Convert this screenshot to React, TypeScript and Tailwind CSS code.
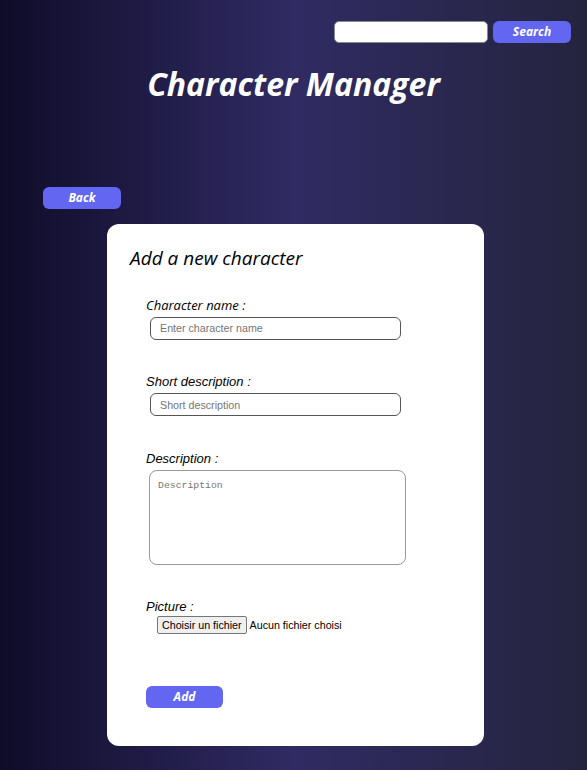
import React from "react";

export default function App() {
  return (
    <div className="min-h-[770px] w-full bg-[linear-gradient(to_right,#0f0c29,#302b63,#24243e)] font-['Comic_Sans_MS','Open_Sans',sans-serif] overflow-hidden">
      <div className="flex justify-end items-center gap-[5px] pt-[21px] pr-[16px]">
        <input
          className="w-[154px] h-[22px] bg-white rounded-[5px] border border-[#8a8a8a] outline-none px-2 text-[11px]"
          type="text"
        />
        <button className="w-[78px] h-[22px] rounded-[6px] bg-[#6366f1] text-white text-[12px] font-bold italic leading-none">
          Search
        </button>
      </div>
      <h1 className="mt-[21px] text-center text-white text-[32px] font-bold italic leading-[40px]">
        Character Manager
      </h1>
      <div className="mt-[80px] pl-[43px]">
        <button className="w-[78px] h-[22px] rounded-[6px] bg-[#6366f1] text-white text-[12px] font-bold italic leading-none">
          Back
        </button>
      </div>
      <div className="mt-[15px] ml-[107px] w-[377px] h-[522px] bg-white rounded-[12px] pt-[20px] pl-[23px]">
        <h2 className="text-[19px] italic text-black leading-[28px]">Add a new character</h2>
        <div className="mt-[24px] pl-[16px]">
          <label className="block text-[13px] italic text-black leading-[18px]">Character name :</label>
          <input
            className="mt-[2px] ml-[4px] w-[251px] h-[23px] rounded-[6px] border border-[#555] px-[9px] text-[10.7px] font-['Liberation_Sans',sans-serif] placeholder:text-[#757575] outline-none"
            placeholder="Enter character name"
          />
        </div>
        <div className="mt-[33px] pl-[16px]">
          <label className="block text-[13px] italic text-black leading-[18px] font-['Liberation_Sans',sans-serif]">Short description :</label>
          <input
            className="mt-[2px] ml-[4px] w-[251px] h-[23px] rounded-[6px] border border-[#555] px-[9px] text-[10.7px] font-['Liberation_Sans',sans-serif] placeholder:text-[#757575] outline-none"
            placeholder="Short description"
          />
        </div>
        <div className="mt-[34px] pl-[16px]">
          <label className="block text-[13px] italic text-black leading-[18px] font-['Liberation_Sans',sans-serif]">Description :</label>
          <textarea
            className="block mt-[2px] ml-[3px] w-[257px] h-[95px] rounded-[8px] border border-[#999] px-[8px] py-[8px] text-[9.8px] font-['Liberation_Mono',monospace] placeholder:text-[#757575] outline-none resize-none"
            placeholder="Description"
          />
        </div>
        <div className="mt-[33px] pl-[16px]">
          <label className="block text-[13px] italic text-black leading-[18px] font-['Liberation_Sans',sans-serif]">Picture :</label>
          <div className="mt-0 ml-[11px] flex items-center gap-[3px] font-['Liberation_Sans',sans-serif] text-[10.7px] text-black">
            <span className="h-[18px] px-[4px] flex items-center bg-[#efefef] border border-[#767676] rounded-[2px]">Choisir un fichier</span>
            <span>Aucun fichier choisi</span>
          </div>
        </div>
        <div className="mt-[49px] pl-[16px]">
          <button className="w-[77px] h-[22px] rounded-[6px] bg-[#6366f1] text-white text-[12px] font-bold italic leading-none">
            Add
          </button>
        </div>
      </div>
    </div>
  );
}
